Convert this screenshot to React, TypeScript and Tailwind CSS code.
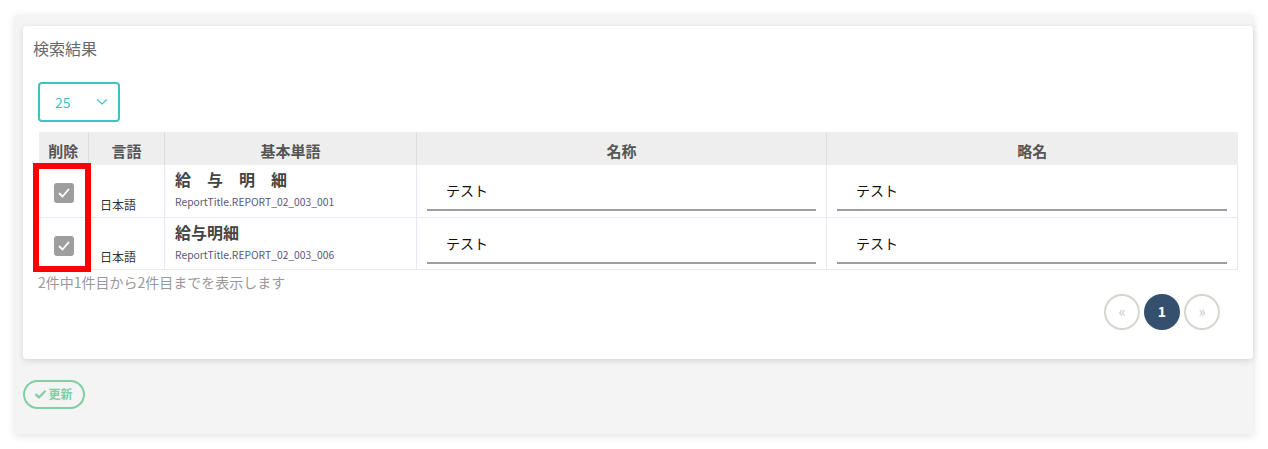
import React from 'react';

const rows = [
  { lang: '日本語', word: '給　与　明　細', key: 'ReportTitle.REPORT_02_003_001', name: 'テスト', short: 'テスト' },
  { lang: '日本語', word: '給与明細', key: 'ReportTitle.REPORT_02_003_006', name: 'テスト', short: 'テスト' },
];

const font = { fontFamily: '"Noto Sans CJK JP", "Noto Sans", sans-serif' };

const Check = () => (
  <div className="w-5 h-5 rounded-[3px] bg-[#9e9e9e] flex items-center justify-center">
    <svg width="14" height="14" viewBox="0 0 14 14" fill="none">
      <path d="M2.5 7.5 L5.5 10.5 L11.5 3.5" stroke="#fff" strokeWidth="1.8" strokeLinecap="round" strokeLinejoin="round" />
    </svg>
  </div>
);

const UnderlineInput = ({ value }: { value: string }) => (
  <div className="px-[10px] pt-[14px] pb-[5px]">
    <div className="border-b-2 border-[#9e9e9e] pl-[19px] pb-[8px] text-[14px] text-[#111] leading-[22px]">
      {value}
    </div>
  </div>
);

export default function App() {
  return (
    <div className="bg-white min-h-[449px] pt-[15px] pl-[15px] text-[#333]" style={font}>
      <div className="w-[1238px] bg-[#f4f4f4] shadow-[0_2px_8px_rgba(0,0,0,0.12)] pt-[11px] pl-[8px] pb-[25px]">
        <div className="w-[1230px] bg-white rounded-[4px] shadow-[0_2px_6px_rgba(0,0,0,0.12)] px-[15px] pt-[10px] pb-[29px]">
          <h3 className="-ml-[5px] text-[16px] leading-[24px] text-[#676a6c]">検索結果</h3>

          <div className="mt-[22px] w-[82px] h-[40px] border-2 border-[#3fc1c9] rounded-[4px] flex items-center justify-between pl-[15px] pr-[10px] text-[#3fc1c9] text-[14px]">
            <span>25</span>
            <svg width="12" height="8" viewBox="0 0 12 8" fill="none">
              <path d="M1 1.5 L6 6 L11 1.5" stroke="#3fc1c9" strokeWidth="1.2" />
            </svg>
          </div>

          <div className="relative mt-[10px]">
            <table className="w-[1199px] border-collapse table-fixed">
              <colgroup>
                <col className="w-[50px]" />
                <col className="w-[76px]" />
                <col className="w-[252px]" />
                <col className="w-[410px]" />
                <col className="w-[411px]" />
              </colgroup>
              <thead>
                <tr className="bg-[#eeeeee] h-[33px] text-[15px] font-bold text-[#555]">
                  <th className="border-r border-[#dddddd] font-bold pt-[5px] leading-[26px]">削除</th>
                  <th className="border-r border-[#dddddd] font-bold pt-[5px] leading-[26px]">言語</th>
                  <th className="border-r border-[#dddddd] font-bold pt-[5px] leading-[26px]">基本単語</th>
                  <th className="border-r border-[#dddddd] font-bold pt-[5px] leading-[26px]">名称</th>
                  <th className="font-bold pt-[5px] leading-[26px]">略名</th>
                </tr>
              </thead>
              <tbody>
                {rows.map((r, i) => (
                  <tr key={i} className="h-[52px] border-b border-x border-[#e7eaf2]">
                    <td className="border-r border-[#e7eaf2] align-middle">
                      <div className="flex justify-center pt-[5px]"><Check /></div>
                    </td>
                    <td className="border-r border-[#e7eaf2] align-bottom pl-[11px] pb-[4px] text-[12px] text-[#333] leading-[16px]">
                      {r.lang}
                    </td>
                    <td className="border-r border-[#e7eaf2] pl-[10px] align-top">
                      <div className="text-[16px] font-bold text-[#444] leading-[22px] pt-[3px]">{r.word}</div>
                      <div className="text-[10.3px] text-[#5a5878] leading-[16px] pt-[4px]">{r.key}</div>
                    </td>
                    <td className="border-r border-[#e7eaf2] align-top">
                      <UnderlineInput value={r.name} />
                    </td>
                    <td className="align-top">
                      <UnderlineInput value={r.short} />
                    </td>
                  </tr>
                ))}
              </tbody>
            </table>
            <div className="absolute left-[-5px] top-[31px] w-[58px] h-[109px] border-[6px] border-[#ff0000] pointer-events-none" />
          </div>

          <p className="mt-[2px] text-[14px] leading-[20px] text-[#999]">2件中1件目から2件目までを表示します</p>

          <div className="flex justify-end gap-[4px] pr-[18px] mt-[2px]">
            <div className="w-[36px] h-[36px] rounded-full border-2 border-[#d6d6d0] flex items-center justify-center text-[15px] text-[#c8c8c0]">«</div>
            <div className="w-[36px] h-[36px] rounded-full bg-[#34506e] flex items-center justify-center text-[14px] font-bold text-white">1</div>
            <div className="w-[36px] h-[36px] rounded-full border-2 border-[#d6d6d0] flex items-center justify-center text-[15px] text-[#c8c8c0]">»</div>
          </div>
        </div>

        <button className="mt-[21px] h-[29px] w-[62px] rounded-full border-2 border-[#7fcfa3] flex items-center justify-center gap-[2px] text-[12px] font-bold text-[#7fcfa3]">
          <svg width="11" height="9" viewBox="0 0 11 9" fill="none">
            <path d="M1.2 4.6 L4 7.4 L9.8 1.4" stroke="#7fcfa3" strokeWidth="2.2" strokeLinecap="round" strokeLinejoin="round" />
          </svg>
          <span>更新</span>
        </button>
      </div>
    </div>
  );
}
